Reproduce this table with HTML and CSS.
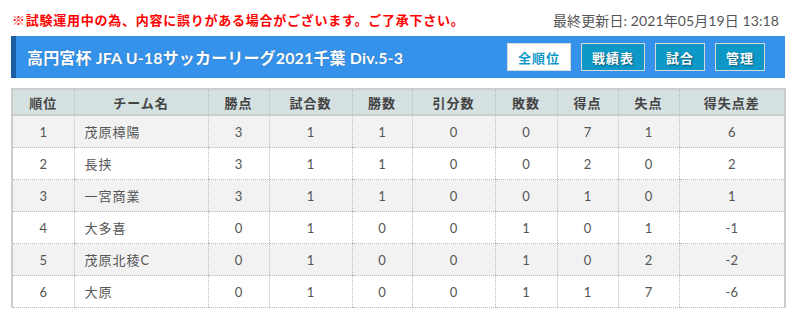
FILE: index.html
```html
<!DOCTYPE html>
<html lang="ja">
<head>
<meta charset="utf-8">
<link rel="stylesheet" href="styles.css">
</head>
<body>
<div class="wrap">
  <div class="topline">
    <span class="notice">※試験運用中の為、内容に誤りがある場合がございます。ご了承下さい。</span>
    <span class="updated">最終更新日: 2021年05月19日 13:18</span>
  </div>
  <div class="titlebar">
    <h1 class="title">高円宮杯 JFA U-18サッカーリーグ2021千葉 Div.5-3</h1>
    <div class="btns">
      <a class="btn btn-active w64">全順位</a>
      <a class="btn w64">戦績表</a>
      <a class="btn w50">試合</a>
      <a class="btn w50">管理</a>
    </div>
  </div>
  <table class="standings">
    <colgroup>
      <col class="c62"><col class="c134"><col class="c61"><col class="c83"><col class="c60"><col class="c83"><col class="c62"><col class="c61"><col class="c61"><col class="c106">
    </colgroup>
    <thead>
      <tr><th>順位</th><th>チーム名</th><th>勝点</th><th>試合数</th><th>勝数</th><th>引分数</th><th>敗数</th><th>得点</th><th>失点</th><th>得失点差</th></tr>
    </thead>
    <tbody>
      <tr><td>1</td><td class="team">茂原樟陽</td><td>3</td><td>1</td><td>1</td><td>0</td><td>0</td><td>7</td><td>1</td><td>6</td></tr>
      <tr><td>2</td><td class="team">長挟</td><td>3</td><td>1</td><td>1</td><td>0</td><td>0</td><td>2</td><td>0</td><td>2</td></tr>
      <tr><td>3</td><td class="team">一宮商業</td><td>3</td><td>1</td><td>1</td><td>0</td><td>0</td><td>1</td><td>0</td><td>1</td></tr>
      <tr><td>4</td><td class="team">大多喜</td><td>0</td><td>1</td><td>0</td><td>0</td><td>1</td><td>0</td><td>1</td><td>-1</td></tr>
      <tr><td>5</td><td class="team">茂原北稜C</td><td>0</td><td>1</td><td>0</td><td>0</td><td>1</td><td>0</td><td>2</td><td>-2</td></tr>
      <tr><td>6</td><td class="team">大原</td><td>0</td><td>1</td><td>0</td><td>0</td><td>1</td><td>1</td><td>7</td><td>-6</td></tr>
    </tbody>
  </table>
</div>
</body>
</html>
```

FILE: styles.css
```css
html, body {
  margin: 0;
  padding: 0;
  background: #fff;
}
body {
  font-family: "Lato", "Noto Sans CJK JP", sans-serif;
  color: #444;
}
.wrap {
  width: 774px;
  margin-left: 11px;
}
.topline {
  display: flex;
  justify-content: space-between;
  align-items: center;
  height: 36px;
  padding-top: 3px;
  box-sizing: border-box;
}
.notice {
  color: #f00;
  font-weight: bold;
  font-size: 13px;
  letter-spacing: 0.75px;
  padding-left: 1px;
}
.updated {
  color: #555;
  font-size: 14px;
  letter-spacing: 0.1px;
  padding-right: 6px;
}
.titlebar {
  display: flex;
  justify-content: space-between;
  align-items: center;
  height: 42px;
  background: #3592ea;
  border-left: 5px solid #1b5da2;
  box-sizing: border-box;
  padding: 0 20px 0 11px;
}
.title {
  margin: 0;
  color: #fff;
  font-size: 16px;
  font-weight: bold;
  letter-spacing: 0.15px;
  text-shadow: 0 0 1px rgba(0,0,0,0.35);
}
.btns {
  display: flex;
  gap: 10px;
}
.btn {
  display: flex;
  align-items: center;
  justify-content: center;
  height: 28px;
  box-sizing: border-box;
  border: 1px solid #d8d8d8;
  background: #0e98c8;
  color: #fff;
  font-size: 13px;
  font-weight: bold;
  letter-spacing: 1px;
  text-shadow: 1px 1px 2px rgba(0,0,0,0.45);
}
.btn-active {
  background: #fff;
  color: #0e98c8;
  text-shadow: none;
}
.w64 { width: 64px; }
.w50 { width: 50px; }
.standings {
  margin-top: 10px;
  width: 774px;
  border-collapse: collapse;
  table-layout: fixed;
  font-size: 13px;
  border-left: 2px solid #ccc;
  border-right: 2px solid #ccc;
  border-top: 2px solid #ccc;
}
.c62 { width: 62px; }
.c134 { width: 134px; }
.c61 { width: 61px; }
.c83 { width: 83px; }
.c60 { width: 60px; }
.c106 { width: 106px; }
.standings th {
  background: #d5e0e1;
  color: #444;
  font-weight: bold;
  height: 24px;
  padding: 0;
  border-left: 1px dotted #bbb;
  border-bottom: 2px solid #ccc;
  letter-spacing: 1px;
}
.standings td {
  height: 31px;
  padding: 0;
  text-align: center;
  color: #555;
  border-left: 1px dotted #bbb;
  border-bottom: 1px dotted #bbb;
}
.standings tbody tr:nth-child(odd) td {
  background: #f2f2f2;
}
.standings td.team {
  text-align: left;
  padding-left: 10px;
  letter-spacing: 1px;
}
```
